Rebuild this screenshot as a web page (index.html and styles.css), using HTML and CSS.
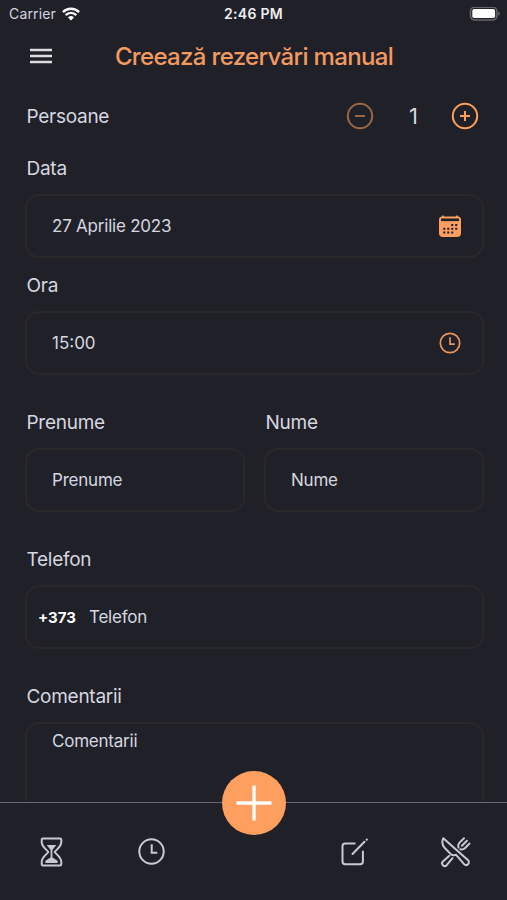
FILE: index.html
```html
<!DOCTYPE html>
<html lang="ro">
<head>
<meta charset="utf-8">
<title>Creează rezervări manual</title>
<link rel="stylesheet" href="styles.css">
</head>
<body>
<div class="status">
  <div class="carrier"><span>Carrier</span>
    <svg width="18" height="14" viewBox="0 0 18 14" fill="none" stroke="#fff" stroke-width="2.3"><path d="M.9 5.1a11.5 11.5 0 0 1 16.2 0M3.7 8.1a7.5 7.5 0 0 1 10.6 0"/><path d="M6 10.4a4.3 4.3 0 0 1 6 0L9 13.5z" fill="#fff" stroke="none"/></svg>
  </div>
  <span class="time">2:46 PM</span>
  <svg class="battery" width="31" height="14" viewBox="0 0 31 14"><rect x="1.500" y=".3" width="26.4" height="12.6" rx="3.8" fill="none" stroke="#66666b" stroke-width="1.5"/><rect x="3.300" y="2.100" width="22.800" height="9" rx="1.800" fill="#fff"/><path d="M29.100 4.500v4.200q1.600-.7 1.600-2.100t-1.600-2.100z" fill="#66666b"/></svg>
</div>
<header class="header">
  <svg class="menu" width="22" height="16" viewBox="0 0 22 16" stroke="#dcdce0" stroke-width="2.300"><path d="M0 2h22M0 8h22M0 14h22"/></svg>
  <h1>Creează rezervări manual</h1>
</header>
<main class="form">
  <div class="persons">
    <span class="label">Persoane</span>
    <div class="stepper">
      <svg class="dim" width="28" height="28" viewBox="0 0 28 28" fill="none" stroke="#ff9f5f" stroke-width="2"><circle cx="14" cy="14" r="12.200"/><path d="M9 14h10"/></svg>
      <span class="count">1</span>
      <svg width="28" height="28" viewBox="0 0 28 28" fill="none" stroke="#ff9f5f" stroke-width="2"><circle cx="14" cy="14" r="12.200"/><path d="M9 14h10M14 9v10"/></svg>
    </div>
  </div>
  <div class="group date">
    <label class="label">Data</label>
    <div class="field"><span>27 Aprilie 2023</span>
      <svg width="24" height="24" viewBox="0 0 24 24"><path d="M4 2.500Q4.600 0 6 2.500H18Q19 0 20 2.500Q23 2.500 23 6V19Q23 23 19 23H5Q1 23 1 19V6Q1 2.500 4 2.500z" fill="#ff9f5f"/><path d="M3 4.500h18v2.600H3z" fill="#202128"/><path d="M13.200 11h7M5.200 14.800h15M5.200 18.600h11" stroke="#202128" stroke-width="2" stroke-dasharray="2.100 1.900"/></svg>
    </div>
  </div>
  <div class="group hour">
    <label class="label">Ora</label>
    <div class="field"><span class="hour-value">15:00</span>
      <svg width="24" height="24" viewBox="0 0 24 24" fill="none" stroke="#e8955c" stroke-width="1.700"><circle cx="12" cy="12" r="9.700"/><path d="M12 6.200v7h4.800"/></svg>
    </div>
  </div>
  <div class="names">
    <div class="group"><label class="label">Prenume</label><div class="field"><span>Prenume</span></div></div>
    <div class="group"><label class="label">Nume</label><div class="field"><span>Nume</span></div></div>
  </div>
  <div class="group">
    <label class="label">Telefon</label>
    <div class="field phone"><b>+373</b><span>Telefon</span></div>
  </div>
  <div class="group">
    <label class="label">Comentarii</label>
    <div class="field comments"><span>Comentarii</span></div>
  </div>
</main>
<nav class="nav">
  <svg width="30" height="32" viewBox="0 0 30 32" fill="none" stroke="#c9c9d1" stroke-width="2" stroke-linejoin="round"><path d="M7 2.500h17q1.300 0 1.300 1.300V6c0 5-5 7.500-6.600 10 1.600 2.500 6.600 5 6.600 10v2.200q0 1.300-1.300 1.300H7q-1.300 0-1.300-1.300V26c0-5 5-7.500 6.600-10C10.700 13.500 5.700 11 5.700 6V3.800q0-1.300 1.300-1.300z"/><path d="M10.700 9h9.600L16.400 14v7.500l5.200 3.200v2.300H9.400v-2.300l5.200-3.200V14z" fill="#c9c9d1" stroke="none"/></svg>
  <svg width="30" height="32" viewBox="0 0 30 32" fill="none" stroke="#c9c9d1" stroke-width="2"><circle cx="14.500" cy="15.500" r="12.200"/><path d="M14.700 8.300v8.500h5.600"/></svg>
  <span class="gap"></span>
  <svg width="30" height="32" viewBox="0 0 30 32" fill="none" stroke="#c9c9d1" stroke-width="2" stroke-linecap="round"><path d="M14.700 7.500H5.200Q2.500 7.500 2.500 10.200v15.300q0 2.700 2.700 2.700h15q2.700 0 2.700-2.700V15.500"/><path d="M12.500 18L24.500 5.800M26.600 3.800l.3-.3"/></svg>
  <svg width="32" height="32" viewBox="0 0 32 32" fill="none" stroke="#c9c9d1" stroke-width="2" stroke-linecap="round" stroke-linejoin="round"><path d="M3.300 2.200C1.300 6.500 2.300 9.500 5 12.300l6.300 6.300q1.200 1 2.800.6l2-.4 8 9.300a2.700 2.700 0 0 0 4-3.800z"/><path d="M9.300 19.800l-6.400 5.700a2.600 2.600 0 0 0 3.800 3.700l5.800-7"/><path d="M24 2.300l-4.700 4.600q-1.800 2.200-.8 4.600M29.500 7.500l-4.600 4.800q-2.200 1.800-4.600.9M26.900 4.700l-5 5"/></svg>
  <div class="fab"><svg width="36" height="36" viewBox="0 0 36 36" stroke="#fff" stroke-width="3.300"><path d="M.5 18h35M18 .5v35"/></svg></div>
</nav>
</body>
</html>
```
FILE: styles.css
```css
* { box-sizing: border-box; }
body {
  margin: 0;
  height: 900px;
  display: flex;
  flex-direction: column;
  overflow: hidden;
  background: #202128;
  color: #d6d6e0;
  font-family: Inter, "Liberation Sans", sans-serif;
}
svg { display: block; flex: none; }
.status {
  height: 27px;
  flex: none;
  display: grid;
  grid-template-columns: 1fr auto 1fr;
  align-items: center;
  padding: 0 7px 0 9px;
  font-size: 14px;
}
.carrier { display: flex; align-items: center; gap: 6px; letter-spacing: .15px; }
.time { font-weight: 600; color: #eeeef2; letter-spacing: .3px; transform: translateX(-1px); }
.battery { justify-self: end; }
.header {
  height: 57px;
  flex: none;
  display: grid;
  grid-template-columns: 30px 1fr 30px;
  align-items: center;
  padding: 0 30px;
}
.header h1 {
  margin: 0;
  padding: 2px 0 0 1px;
  text-align: center;
  color: #f29a60;
  font-size: 24px;
  font-weight: 500;
  white-space: nowrap;
  letter-spacing: -.66px;
}
.form {
  flex: 1;
  min-height: 0;
  overflow: hidden;
  padding: 0 23px 0 25px;
}
.persons {
  height: 64px;
  display: flex;
  align-items: center;
  justify-content: space-between;
  padding-right: 5px;
}
.persons .label { padding-top: 2px; }
.stepper { display: flex; align-items: center; }
.dim { opacity: .55; }
.count { width: 77px; padding-left: 2px; text-align: center; font-size: 22px; }
.label {
  display: block;
  padding-left: 1.5px;
  font-size: 19px;
  line-height: 26px;
  letter-spacing: -.27px;
}
.group { margin-bottom: 35px; }
.group.date { margin: 8px 0 15px; }
.field {
  height: 64px;
  margin-top: 12px;
  border: 2px solid #2a272b;
  border-radius: 14px;
  padding: 0 20px 0 25px;
  display: flex;
  align-items: center;
  justify-content: space-between;
  font-size: 17px;
  letter-spacing: -.22px;
}
.hour-value { letter-spacing: 0; }
.names { display: grid; grid-template-columns: 1fr 1fr; gap: 19px; }
.phone { justify-content: flex-start; gap: 13px; padding-left: 11px; }
.phone b { color: #fff; font-size: 15px; letter-spacing: 0; }
.comments { height: 130px; align-items: flex-start; padding-top: 7px; }
.nav {
  position: relative;
  height: 98px;
  flex: none;
  border-top: 1px solid #68686e;
  display: grid;
  grid-template-columns: repeat(5, 1fr);
  justify-items: center;
  padding: 33px 0 0;
}
.fab {
  position: absolute;
  left: 50%;
  top: -32px;
  width: 64px;
  height: 64px;
  transform: translateX(-50%);
  border-radius: 50%;
  background: #ff9f5f;
  display: grid;
  place-items: center;
}
```
